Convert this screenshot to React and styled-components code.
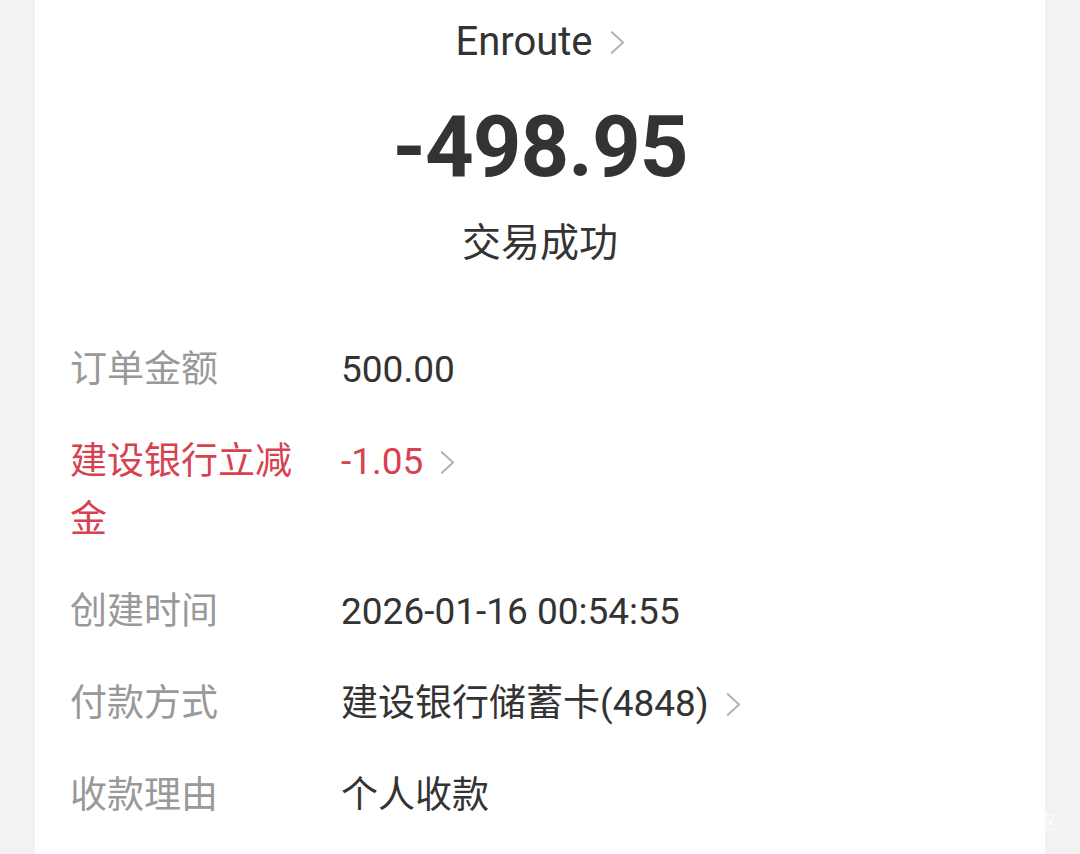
import styled, { createGlobalStyle } from "styled-components";

const GlobalStyle = createGlobalStyle`
  html, body {
    margin: 0;
    padding: 0;
    background: #f2f2f2;
  }
  body {
    font-family: Roboto, "Noto Sans CJK SC", "Noto Sans", sans-serif;
    -webkit-font-smoothing: antialiased;
  }
`;

const rows = [
  { label: "订单金额", value: "500.00" },
  { label: "建设银行立减金", value: "-1.05", red: true, arrow: true },
  { label: "创建时间", value: "2026-01-16 00:54:55" },
  { label: "付款方式", value: "建设银行储蓄卡(4848)", arrow: true },
  { label: "收款理由", value: "个人收款" },
];

const Chevron = ({ color = "#b3b3b3" }) => (
  <ChevronSvg viewBox="0 0 16 26" fill="none">
    <polyline
      points="2,2 14,13 2,24"
      stroke={color}
      strokeWidth="2.2"
      strokeLinecap="round"
      strokeLinejoin="round"
    />
  </ChevronSvg>
);

const App = () => {
  return (
    <Page>
      <GlobalStyle />
      <Card>
        <Header>
          <Merchant>
            Enroute
            <Chevron />
          </Merchant>
          <Amount>-498.95</Amount>
          <Status>交易成功</Status>
        </Header>

        <Details>
          {rows.map((row) => (
            <Row key={row.label}>
              <Label red={row.red}>{row.label}</Label>
              <Value red={row.red}>
                {row.value}
                {row.arrow && <Chevron />}
              </Value>
            </Row>
          ))}
        </Details>
      </Card>
      <Watermark>区</Watermark>
    </Page>
  );
};

export default App;

const Page = styled.div`
  position: relative;
  min-height: 854px;
  overflow: hidden;
`;

const Card = styled.div`
  margin: 0 35px;
  min-height: 854px;
  background: #ffffff;
  box-sizing: border-box;
  padding-top: 17px;
`;

const Header = styled.div`
  display: flex;
  flex-direction: column;
  align-items: center;
`;

const Merchant = styled.div`
  display: flex;
  align-items: center;
  gap: 17px;
  font-size: 40px;
  line-height: 50px;
  color: #333333;
`;

const ChevronSvg = styled.svg`
  width: 15px;
  height: 25px;
  flex-shrink: 0;
`;

const Amount = styled.div`
  margin-top: 25px;
  font-size: 85px;
  line-height: 110px;
  font-weight: 700;
  color: #333333;
  letter-spacing: -1px;
`;

const Status = styled.div`
  margin-top: 16px;
  font-size: 39px;
  line-height: 50px;
  color: #333333;
`;

const Details = styled.div`
  margin-top: 73px;
  padding: 0 35px;
  display: flex;
  flex-direction: column;
  gap: 34px;
`;

const Row = styled.div`
  display: flex;
  align-items: flex-start;
  font-size: 37px;
  line-height: 58px;
`;

const Label = styled.div`
  width: 240px;
  flex-shrink: 0;
  margin-right: 31px;
  color: ${(p) => (p.red ? "#d6424f" : "#999999")};
`;

const Value = styled.div`
  display: flex;
  align-items: center;
  gap: 17px;
  color: ${(p) => (p.red ? "#d6424f" : "#333333")};
`;

const Watermark = styled.div`
  position: absolute;
  left: 1040px;
  top: 808px;
  font-size: 18px;
  color: rgba(255, 255, 255, 0.8);
`;
